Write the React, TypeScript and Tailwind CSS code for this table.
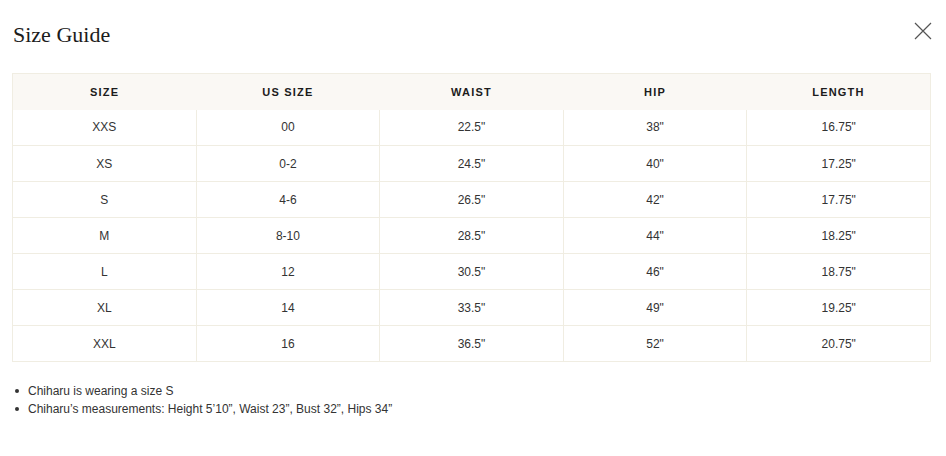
import React from 'react';

const rows = [
  ['XXS', '00', '22.5"', '38"', '16.75"'],
  ['XS', '0-2', '24.5"', '40"', '17.25"'],
  ['S', '4-6', '26.5"', '42"', '17.75"'],
  ['M', '8-10', '28.5"', '44"', '18.25"'],
  ['L', '12', '30.5"', '46"', '18.75"'],
  ['XL', '14', '33.5"', '49"', '19.25"'],
  ['XXL', '16', '36.5"', '52"', '20.75"'],
];

const headers = ['SIZE', 'US SIZE', 'WAIST', 'HIP', 'LENGTH'];

const notes = [
  'Chiharu is wearing a size S',
  'Chiharu’s measurements: Height 5’10”, Waist 23”, Bust 32”, Hips 34”',
];

export default function App() {
  return (
    <div className="w-[946px] h-[456px] bg-white pl-[12px] pr-[15px] font-['Liberation_Sans',Arial,sans-serif] text-[#2b2b2b]">
      {/* title row */}
      <div className="flex justify-between pt-[21px]">
        <h1 className="pl-[1px] font-['Liberation_Serif',Georgia,serif] text-[22px] leading-[28px] text-[#1c1c1c]">
          Size Guide
        </h1>
        <button className="mt-[1px] mr-[-1px] w-[18px] h-[18px] text-[#555]" aria-label="Close">
          <svg viewBox="0 0 18 18" width="18" height="18" fill="none" stroke="currentColor" strokeWidth="1.2">
            <path d="M1 1 L17 17 M17 1 L1 17" />
          </svg>
        </button>
      </div>

      <table className="mt-[24px] w-full table-fixed border-collapse border border-[#f0ede2] text-center">
        <thead>
          <tr className="bg-[#faf8f4]">
            {headers.map((h) => (
              <th
                key={h}
                className="h-[36px] p-0 text-[11px] font-bold tracking-[1.2px] text-[#1c1c1c]"
              >
                {h}
              </th>
            ))}
          </tr>
        </thead>
        <tbody>
          {rows.map((r, ri) => (
            <tr key={r[0]}>
              {r.map((c, i) => (
                <td
                  key={i}
                  className={
                    ri === 0
                      ? 'h-[36px] p-0 border border-t-0 border-[#f0ede2] text-[12px] text-[#333]'
                      : 'h-[36px] p-0 border border-[#f0ede2] text-[12px] text-[#333]'
                  }
                >
                  {c}
                </td>
              ))}
            </tr>
          ))}
        </tbody>
      </table>

      <div className="mt-[20px] flex flex-col text-[12px] leading-[18px] text-[#333]">
        {notes.map((n) => (
          <div key={n} className="flex items-center">
            <span className="ml-[3px] mr-[9px] w-[4px] h-[4px] rounded-full bg-[#333]" />
            <span>{n}</span>
          </div>
        ))}
      </div>
    </div>
  );
}
